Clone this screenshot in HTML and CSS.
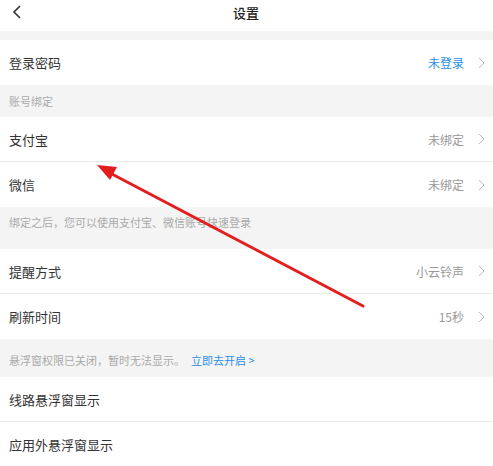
FILE: index.html
```html
<!DOCTYPE html>
<html lang="zh-CN">
<head>
    <meta charset="UTF-8">
    <meta name="viewport" content="width=device-width, initial-scale=1.0">
    <title>设置</title>
    <link rel="stylesheet" href="styles.css">
</head>
<body>
    <div class="page">
        <div class="header">
            <svg class="back" width="10" height="14" viewBox="0 0 10 14">
                <path d="M8 1 L2 7 L8 13" fill="none" stroke="#333" stroke-width="1.6"/>
            </svg>
            <span class="title">设置</span>
        </div>

        <div class="gap"></div>

        <div class="group">
            <div class="row">
                <span class="label">登录密码</span>
                <span class="value blue">未登录</span>
                <svg class="arrow" width="7" height="12" viewBox="0 0 7 12"><path d="M1 1 L6 6 L1 11" fill="none" stroke="#bbb" stroke-width="1"/></svg>
            </div>
        </div>

        <div class="section-title">账号绑定</div>

        <div class="group">
            <div class="row">
                <span class="label">支付宝</span>
                <span class="value">未绑定</span>
                <svg class="arrow" width="7" height="12" viewBox="0 0 7 12"><path d="M1 1 L6 6 L1 11" fill="none" stroke="#bbb" stroke-width="1"/></svg>
            </div>
            <div class="row">
                <span class="label">微信</span>
                <span class="value">未绑定</span>
                <svg class="arrow" width="7" height="12" viewBox="0 0 7 12"><path d="M1 1 L6 6 L1 11" fill="none" stroke="#bbb" stroke-width="1"/></svg>
            </div>
        </div>

        <div class="note note-tall">绑定之后，您可以使用支付宝、微信账号快速登录</div>

        <div class="group">
            <div class="row">
                <span class="label">提醒方式</span>
                <span class="value">小云铃声</span>
                <svg class="arrow" width="7" height="12" viewBox="0 0 7 12"><path d="M1 1 L6 6 L1 11" fill="none" stroke="#bbb" stroke-width="1"/></svg>
            </div>
            <div class="row">
                <span class="label">刷新时间</span>
                <span class="value">15秒</span>
                <svg class="arrow" width="7" height="12" viewBox="0 0 7 12"><path d="M1 1 L6 6 L1 11" fill="none" stroke="#bbb" stroke-width="1"/></svg>
            </div>
        </div>

        <div class="note note-short">悬浮窗权限已关闭，暂时无法显示。<span class="link">立即去开启 &gt;</span></div>

        <div class="group">
            <div class="row">
                <span class="label">线路悬浮窗显示</span>
            </div>
            <div class="row">
                <span class="label">应用外悬浮窗显示</span>
            </div>
        </div>

        <!-- annotation drawn over the screenshot -->
        <svg class="pointer" width="493" height="466" viewBox="0 0 493 466">
            <line x1="363" y1="306" x2="110" y2="173" stroke="#e41e1e" stroke-width="3" stroke-linecap="round"/>
            <polygon points="97,165 117,167 110,180" fill="#e41e1e"/>
        </svg>
    </div>
</body>
</html>
```

FILE: styles.css
```css
body {
    margin: 0;
    background-color: #f4f4f4;
    font-family: "Noto Sans CJK SC", "Noto Sans", sans-serif;
    color: #333;
}
.page {
    position: relative;
    width: 493px;
    height: 466px;
    overflow: hidden;
    background-color: #f4f4f4;
}
.header {
    position: relative;
    height: 31px;
    background: #ffffff;
    display: flex;
    align-items: center;
    justify-content: center;
}
.back {
    position: absolute;
    left: 12px;
    top: 5px;
}
.title {
    font-size: 13px;
    font-weight: 500;
    color: #222;
    margin-top: -6px;
    margin-left: -1px;
}
.gap {
    height: 9px;
}
.group {
    background: #ffffff;
}
.row {
    height: 45px;
    display: flex;
    align-items: center;
    padding: 0 8px 0 9px;
    box-sizing: border-box;
    border-bottom: 1px solid #ebebeb;
}
.row:last-child {
    border-bottom: none;
}
.label {
    flex: 1;
    font-size: 13px;
    color: #333;
}
.value {
    font-size: 12px;
    color: #999;
    margin-right: 14px;
}
.value.blue {
    color: #2a8ee6;
}
.section-title {
    height: 32px;
    line-height: 32px;
    padding-left: 9px;
    font-size: 11px;
    color: #aaa;
}
.note {
    padding-left: 9px;
    font-size: 11px;
    line-height: 14px;
    color: #aaa;
    box-sizing: border-box;
}
.note-tall {
    height: 42px;
    padding-top: 8px;
}
.note-short {
    height: 38px;
    padding-top: 14px;
}
.link {
    color: #2a8ee6;
    margin-left: 6px;
}
.pointer {
    position: absolute;
    left: 0;
    top: 0;
    pointer-events: none;
}
```
